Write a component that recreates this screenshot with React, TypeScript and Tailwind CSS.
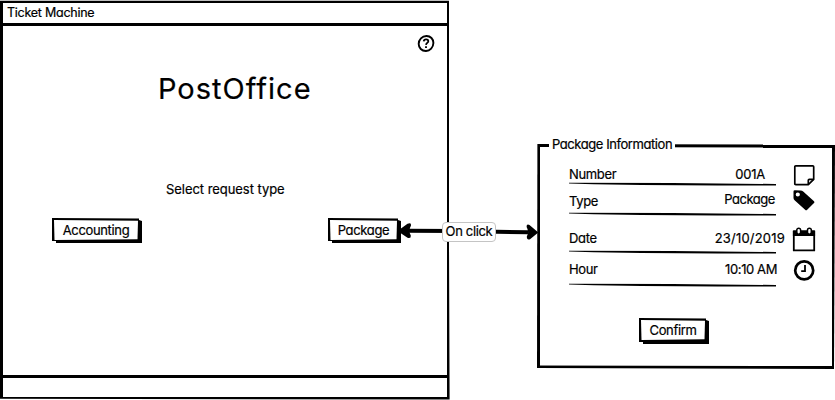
import React from "react";

function SketchButton({ label, box, face }: { label: string; box: string; face: string }) {
  return (
    <button
      className={`${box} flex items-start bg-black pt-[2px] pl-[2px] [clip-path:polygon(0_0,calc(100%-3px)_0.6px,calc(100%-3px)_2px,100%_3px,100%_100%,4px_100%,4px_calc(100%-2px),0_calc(100%-2px))]`}
    >
      <span
        className={`${face} flex items-center justify-center bg-white tracking-[-0.35px] [clip-path:polygon(0_0,100%_0.8px,calc(100%-0.5px)_calc(100%-0.8px),0.5px_100%)]`}
      >
        {label}
      </span>
    </button>
  );
}

function Rule({ className = "" }: { className?: string }) {
  return (
    <div
      className={`${className} h-[4px] w-[207px] bg-black [clip-path:polygon(0_0.8px,50%_1px,100%_2px,100%_3.6px,72%_3.5px,35%_2.9px,12%_2.2px,0_1.5px)]`}
    />
  );
}

function Row({ label, value, className, valueClass }: { label: string; value: string; className: string; valueClass: string }) {
  return (
    <div className={`${className} flex w-[218px] justify-between leading-4`}>
      <span className="tracking-[-0.35px]">{label}</span>
      <span className={`${valueClass} whitespace-nowrap`}>{value}</span>
    </div>
  );
}

export default function App() {
  return (
    <main className="relative flex h-[400px] w-[835px] items-start overflow-hidden bg-white font-['Inter','Liberation_Sans',sans-serif] text-[13px] leading-4 text-black [-webkit-text-stroke:0.2px] [font-feature-settings:'cv11']">
      <section className="flex h-[400px] w-[450px] flex-col bg-black pt-[3px] pr-[3px] pl-[3px] [clip-path:polygon(0_0.7px,449px_0.7px,449px_60%,449.6px_399.4px,0_398.8px)]">
        <header className="h-[20px] w-[444px] shrink-0 bg-white pt-[2px] pl-[4px] text-[12.5px] tracking-[-0.25px]">Ticket Machine</header>
        <div className="mt-[3px] flex h-[349px] w-[444px] shrink-0 flex-col bg-white [clip-path:polygon(0_-0.6px,100%_0,100%_100%,0_100%)]">
          <div className="flex justify-end pt-[9px] pr-[12px]">
            <svg width="18" height="18" viewBox="0 0 18 18" fill="none" stroke="black">
              <path d="M9.4 1C13.5 0.9 16.5 4.1 16.4 8.1C16.3 12.5 13 15.9 9 16C4.8 16.1 1.6 12.9 1.7 8.8C1.8 4.7 5 1.1 9.4 1Z" strokeWidth="1.9" />
              <path d="M6.7 6.4C6.8 4.9 7.8 4.3 9.1 4.3C10.5 4.3 11.3 5.1 11.3 6.2C11.3 7.9 9.1 7.9 9 9.9" strokeWidth="1.8" />
              <path d="M9 11.3V13.1" strokeWidth="1.9" />
            </svg>
          </div>
          <h1 className="mt-[16px] ml-[155px] text-[29px] leading-10 tracking-[1px]">PostOffice</h1>
          <p className="mt-[72px] ml-[163px] tracking-[-0.05px]">Select request type</p>
          <div className="mt-[21px] ml-[49px] flex">
            <SketchButton label="Accounting" box="h-[25px] w-[90px]" face="h-[20px] w-[84px]" />
            <div className="ml-[186px]">
              <SketchButton label="Package" box="h-[25px] w-[73px]" face="h-[20px] w-[67px]" />
            </div>
          </div>
        </div>
        <footer className="mt-[3px] h-[19px] w-[444px] shrink-0 bg-white" />
      </section>

      <section className="mt-[138px] ml-[87px] w-[298px]">
        <div className="h-[231px] w-[298px] bg-black pt-[9px] pl-[3px] [clip-path:polygon(0.4px_6px,100%_6.6px,297px_100%,0_230px)]">
          <div className="flex h-[219px] w-[292px] bg-white [clip-path:polygon(0_0,100%_0.5px,292px_100%,-0.5px_218.5px)]">
            <div className="ml-[29px] w-[218px]">
              <Row className="pt-[19px]" label="Number" value="001A" valueClass="mr-[22px] tracking-[-0.2px]" />
              <Rule />
              <Row className="mt-[7px]" label="Type" value="Package" valueClass="mr-[12px] -mt-[2px] tracking-[-0.45px]" />
              <Rule className="mt-[3px]" />
              <Row className="mt-[14px]" label="Date" value="23/10/2019" valueClass="mr-[2px] tracking-[0.2px]" />
              <Rule className="mt-[4px]" />
              <Row className="mt-[7px]" label="Hour" value="10:10 AM" valueClass="mr-[10px] tracking-[-0.4px]" />
              <Rule className="mt-[6px]" />
              <div className="mt-[31px] ml-[70px]">
                <SketchButton label="Confirm" box="h-[26px] w-[70px]" face="h-[20px] w-[64px]" />
              </div>
            </div>
            <div className="ml-[4px] flex w-[26px] flex-col items-center pt-[17px]">
              <svg width="24" height="24" viewBox="0 0 24 24" fill="none" stroke="black" strokeWidth="1.7">
                <path d="M3.8 1.8H20.7Q21.7 1.8 21.7 2.8V15.3L16.3 20.7H3.8Q2.8 20.7 2.8 19.7V2.8Q2.8 1.8 3.8 1.8Z" />
                <path d="M16.3 20.7V16.3Q16.3 15.3 17.3 15.3H21.7" />
              </svg>
              <svg className="mt-px" width="24" height="24" viewBox="0 0 24 24">
                <path
                  fillRule="evenodd"
                  d="M1.5 2.5Q1.5 1.2 2.8 1.2L8.5 1.5Q10.2 1.6 11.2 2.5L22 12.2Q23 13.1 22 14.1L15.2 20.8Q14.2 21.8 13.1 20.8L2.6 11.2Q1.6 10.3 1.5 8.9ZM5.8 3.4A2.1 2.1 0 1 0 5.8 7.6A2.1 2.1 0 1 0 5.8 3.4Z"
                />
              </svg>
              <svg className="mt-[13px]" width="24" height="26" viewBox="0 0 24 26">
                <path d="M1.8 5.5H22.2V24.4H1.8Z" fill="white" stroke="black" strokeWidth="1.8" />
                <path d="M0.9 5.4Q0.9 4.4 2 4.4H22Q23.1 4.4 23.1 5.4V10H0.9Z" />
                <rect x="4.8" y="2.2" width="3.8" height="6" rx="1.9" fill="white" stroke="black" strokeWidth="1.5" />
                <rect x="15.5" y="2.2" width="3.8" height="6" rx="1.9" fill="white" stroke="black" strokeWidth="1.5" />
              </svg>
              <svg className="mt-[6px]" width="24" height="24" viewBox="0 0 24 24" fill="none" stroke="black">
                <circle cx="12.2" cy="12.4" r="9" strokeWidth="2.7" />
                <path d="M13 6.9V13.1H9.2" strokeWidth="1.8" />
              </svg>
            </div>
          </div>
        </div>
      </section>

      <h2 className="absolute top-[136px] left-[549px] w-[126px] bg-white pl-[3px] tracking-[-0.43px] whitespace-nowrap">Package Information</h2>

      <svg className="absolute top-[220px] left-[396px]" width="144" height="22" viewBox="0 0 144 22">
        <path d="M10 10.7L60 11L132 12.3" fill="none" stroke="black" strokeWidth="4" />
        <path d="M1.5 11L11.5 3.8Q15.5 2.2 15 5.5Q12 11 14.8 15.6Q15.2 19 11.5 17.8Z" />
        <path d="M142.3 12.5L133.5 5Q130.4 3.6 130.6 7Q133.5 12 130.8 16.6Q130.8 20.4 134 19.2Z" />
      </svg>
      <div className="absolute top-[222px] left-[442px] flex h-[20px] w-[54px] items-center justify-center rounded-[4px] border border-[#c4c4c4] bg-white pb-[3px] tracking-[-0.35px] whitespace-nowrap">
        On click
      </div>
    </main>
  );
}
